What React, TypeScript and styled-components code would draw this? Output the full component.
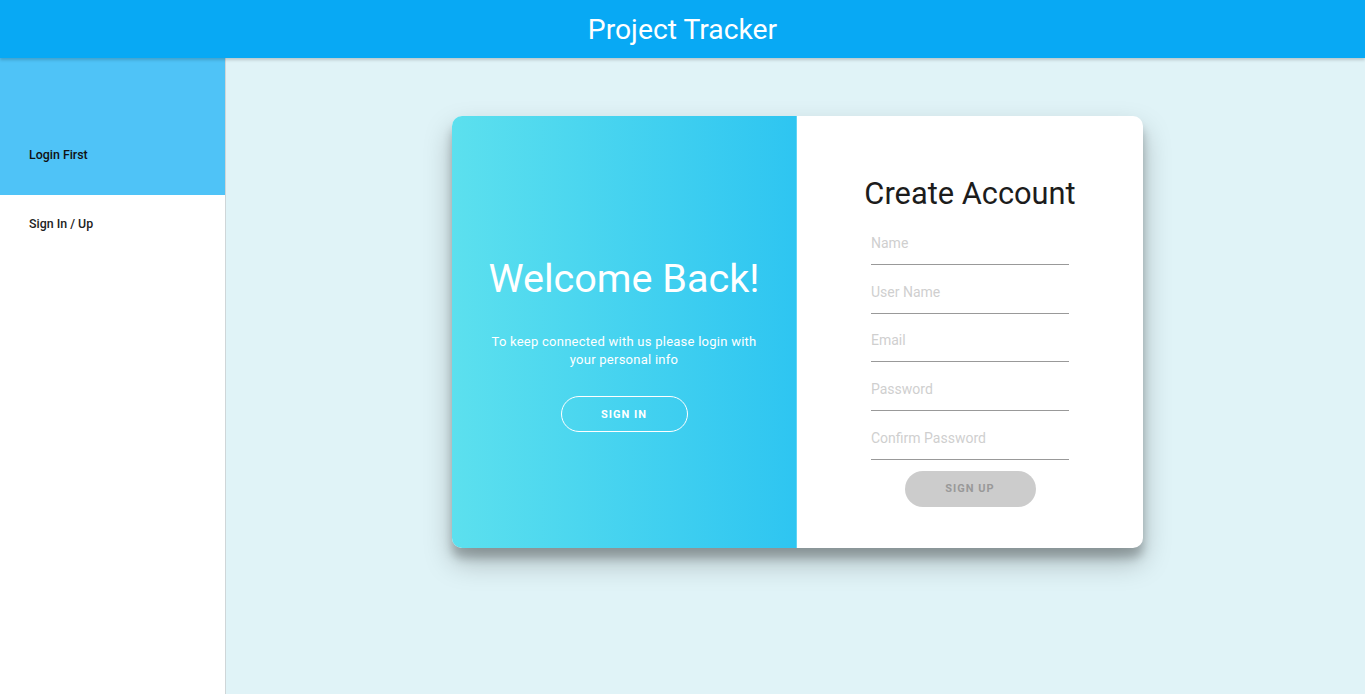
import React from "react";
import styled, { createGlobalStyle } from "styled-components";

const Global = createGlobalStyle`
  html, body { margin: 0; padding: 0; height: 100%; }
  body { font-family: Roboto, "Liberation Sans", sans-serif; background: #e0f3f7; overflow: hidden; }
  #root { height: 100%; }
  * { box-sizing: border-box; }
`;

const Page = styled.div`
  display: flex;
  flex-direction: column;
  height: 694px;
`;

const Header = styled.header`
  height: 58px;
  flex: 0 0 58px;
  background: #08a9f4;
  color: #fff;
  display: flex;
  align-items: center;
  justify-content: center;
  font-size: 28.3px;
  font-weight: 400;
  box-shadow: 0 2px 3px rgba(0,0,0,0.18);
  position: relative;
  z-index: 2;
`;

const Body = styled.div`
  flex: 1;
  display: flex;
  min-height: 0;
`;

const Sidebar = styled.nav`
  width: 226px;
  flex: 0 0 226px;
  background: #fff;
  border-right: 1px solid #cfd6d8;
  box-shadow: 1px 0 2px rgba(0,0,0,0.08);
  display: flex;
  flex-direction: column;
`;

const NavItem = styled.div<{ $active?: boolean; $tall?: boolean }>`
  background: ${p => (p.$active ? "#4fc3f7" : "transparent")};
  height: ${p => (p.$tall ? "137px" : "56px")};
  padding: 0 0 0 29px;
  display: flex;
  align-items: ${p => (p.$tall ? "flex-end" : "center")};
  padding-bottom: ${p => (p.$tall ? "33px" : "0")};
  font-size: 12.4px;
  font-weight: 500;
  color: ${p => (p.$active ? "#111" : "#222")};
`;

const Main = styled.main`
  flex: 1;
  background: #e0f3f7;
  display: flex;
  justify-content: center;
  padding-top: 58px;
  padding-left: 4px;
`;

const Card = styled.div`
  width: 691px;
  height: 432px;
  border-radius: 10px;
  overflow: hidden;
  display: flex;
  background: #fff;
  box-shadow: 0 14px 28px rgba(0,0,0,0.25), 0 10px 10px rgba(0,0,0,0.22);
`;

const Overlay = styled.div`
  width: 345px;
  flex: 0 0 345px;
  background: linear-gradient(to right, #5ce0ee, #2ec5f1);
  color: #fff;
  display: flex;
  flex-direction: column;
  align-items: center;
  justify-content: center;
  text-align: center;
  padding: 25px 30px 0;
  border-right: 1px solid #5fd4f5;
`;

const Welcome = styled.h1`
  margin: 0 0 32px;
  font-size: 39.6px;
  font-weight: 400;
  line-height: 44px;
  white-space: nowrap;
`;

const Lead = styled.p`
  margin: 0 0 27px;
  font-size: 13px;
  line-height: 18px;
  letter-spacing: 0.25px;
  font-weight: 400;
`;

const GhostButton = styled.button`
  width: 127px;
  height: 36px;
  border-radius: 18px;
  border: 1px solid #fff;
  background: transparent;
  color: #fff;
  font-family: Roboto, "Liberation Sans", sans-serif;
  font-size: 11px;
  font-weight: 700;
  letter-spacing: 1px;
  text-transform: uppercase;
`;

const FormPanel = styled.div`
  flex: 1;
  display: flex;
  flex-direction: column;
  align-items: center;
  padding-top: 58px;
`;

const FormTitle = styled.h2`
  margin: 0 0 2px;
  font-size: 30.8px;
  font-weight: 400;
  color: #1c1c1c;
  line-height: 40px;
`;

const Field = styled.input`
  width: 198px;
  height: 48.75px;
  border: none;
  border-bottom: 1px solid #999;
  padding: 16px 0 10px;
  font-family: Roboto, "Liberation Sans", sans-serif;
  font-size: 14px;
  outline: none;
  background: transparent;
  &::placeholder { color: #cfcfcf; }
`;

const SolidButton = styled.button`
  margin-top: 11px;
  width: 131px;
  height: 36px;
  border-radius: 18px;
  border: none;
  background: #cccccc;
  color: #999;
  font-family: Roboto, "Liberation Sans", sans-serif;
  font-size: 11px;
  font-weight: 700;
  letter-spacing: 1px;
  text-transform: uppercase;
`;

export default function App() {
  const fields = ["Name", "User Name", "Email", "Password", "Confirm Password"];
  return (
    <Page>
      <Global />
      <Header>Project Tracker</Header>
      <Body>
        <Sidebar>
          <NavItem $active $tall>Login First</NavItem>
          <NavItem>Sign In / Up</NavItem>
        </Sidebar>
        <Main>
          <Card>
            <Overlay>
              <Welcome>Welcome Back!</Welcome>
              <Lead>To keep connected with us please login with your personal info</Lead>
              <GhostButton>Sign In</GhostButton>
            </Overlay>
            <FormPanel>
              <FormTitle>Create Account</FormTitle>
              {fields.map(f => (
                <Field key={f} placeholder={f} type={f.includes("Password") ? "password" : "text"} />
              ))}
              <SolidButton>Sign Up</SolidButton>
            </FormPanel>
          </Card>
        </Main>
      </Body>
    </Page>
  );
}
